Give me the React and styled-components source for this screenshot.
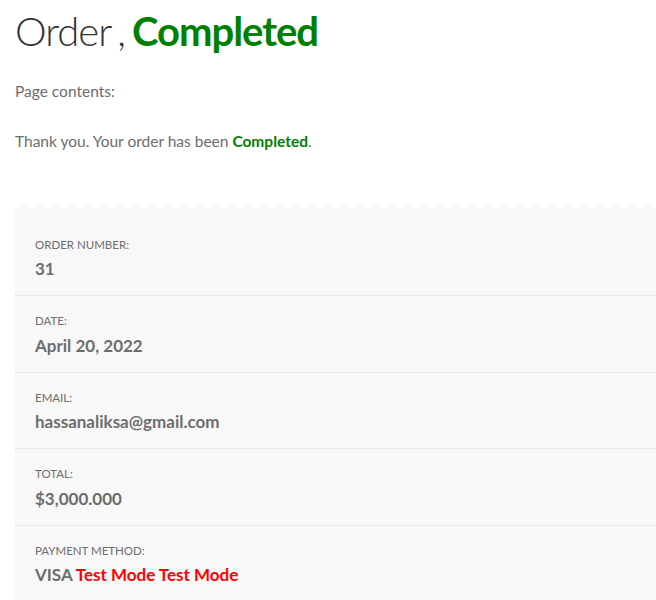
import React from 'react';
import styled, { createGlobalStyle } from 'styled-components';

const GlobalStyle = createGlobalStyle`
	body {
		margin: 0;
		background: #fff;
		font-family: "Lato", "Noto Sans", sans-serif;
		color: #6d6d6d;
	}
`;

const Page = styled.div`
	padding: 5px 0 0 15px;
	overflow: hidden;
`;

const Title = styled.h1`
	margin: 0;
	font-size: 40px;
	line-height: 52px;
	font-weight: 300;
	color: #333;
	letter-spacing: -1px;
	word-spacing: -3px;

	strong {
		font-weight: 700;
		color: #008000;
	}
`;

const Text = styled.p`
	margin: ${props => props.top || 0}px 0 0;
	font-size: 15.5px;
	line-height: 1.6;

	strong {
		color: #008000;
		font-weight: 700;
	}
`;

const ZigZag = styled.div`
	margin-top: 48px;
	height: 8px;
	background: conic-gradient(from 135deg at 50% 0%, #f8f8f8 90deg, transparent 0) 0 0 / 16px 8px repeat-x;
`;

const Details = styled.ul`
	list-style: none;
	margin: 0;
	padding: 10px 0 0;
	background: #f8f8f8;
`;

const Row = styled.li`
	padding: 16px 20px 13px;
	border-bottom: 1px dotted #dadada;

	&:last-child {
		border-bottom: none;
	}
`;

const Label = styled.div`
	font-size: 11.5px;
	text-transform: uppercase;
	line-height: 1.6;
	color: #6d6d6d;
`;

const Value = styled.div`
	margin-top: 1px;
	font-size: 17px;
	font-weight: 700;
	line-height: 1.6;
	color: #6d6d6d;

	span {
		color: #ff0000;
	}
`;

const rows = [
	{ label: 'Order number:', value: '31' },
	{ label: 'Date:', value: 'April 20, 2022' },
	{ label: 'Email:', value: 'hassanaliksa@gmail.com' },
	{ label: 'Total:', value: '$3,000.000' },
];

const App = () => {
	return (
		<>
			<GlobalStyle />
			<Page>
				<Title>Order , <strong>Completed</strong></Title>
				<Text top={22}>Page contents:</Text>
				<Text top={25}>Thank you. Your order has been <strong>Completed</strong>.</Text>
				<ZigZag />
				<Details>
					{rows.map(row => (
						<Row key={row.label}>
							<Label>{row.label}</Label>
							<Value>{row.value}</Value>
						</Row>
					))}
					<Row>
						<Label>Payment method:</Label>
						<Value>VISA <span>Test Mode Test Mode</span></Value>
					</Row>
				</Details>
			</Page>
		</>
	);
}

export default App;
